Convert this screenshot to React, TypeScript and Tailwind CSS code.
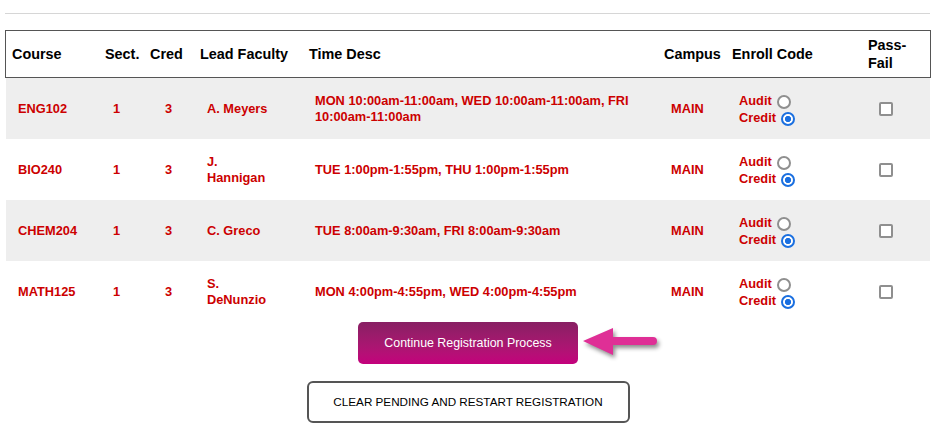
import React from "react";

type Row = {
  course: string;
  faculty: string;
  time: string;
  gray: boolean;
};

const rows: Row[] = [
  { course: "ENG102", faculty: "A. Meyers", time: "MON 10:00am-11:00am, WED 10:00am-11:00am, FRI 10:00am-11:00am", gray: true },
  { course: "BIO240", faculty: "J. Hannigan", time: "TUE 1:00pm-1:55pm, THU 1:00pm-1:55pm", gray: false },
  { course: "CHEM204", faculty: "C. Greco", time: "TUE 8:00am-9:30am, FRI 8:00am-9:30am", gray: true },
  { course: "MATH125", faculty: "S. DeNunzio", time: "MON 4:00pm-4:55pm, WED 4:00pm-4:55pm", gray: false },
];

const cols = "grid grid-cols-[93px_45px_50px_109px_355px_68px_136px_1fr]";

const radioCls =
  "appearance-none inline-block w-[14px] h-[14px] rounded-full border-2 border-[#8f8f8f] bg-white ml-[5px] mr-[3px] mt-[3px] align-[-4px] checked:border-[#1a6fe0] checked:bg-[radial-gradient(circle,#1a6fe0_0_2.8px,#ffffff_3.4px)]";

export default function App() {
  return (
    <div
      className="w-[936px] h-[431px] bg-white overflow-hidden px-[5px] pt-[13px]"
      style={{ fontFamily: '"Liberation Sans", Arial, sans-serif' }}
    >
      <div className="h-px bg-[#d6d6d6] mr-[1px]" />
      <div className="mt-[16px]">
        <div className={`${cols} h-[48px] items-center border border-[#555] text-black font-bold text-[14.4px] leading-[18px]`}>
          <div className="px-[6px]">Course</div>
          <div className="px-[6px]">Sect.</div>
          <div className="px-[6px]">Cred</div>
          <div className="px-[6px]">Lead Faculty</div>
          <div className="px-[6px]">Time Desc</div>
          <div className="px-[6px]">Campus</div>
          <div className="px-[6px]">Enroll Code</div>
          <div className="px-[6px]">
            Pass-
            <br />
            Fail
          </div>
        </div>
        <div className="px-[1px]">
          {rows.map((r) => (
            <div
              key={r.course}
              className={`${cols} h-[61px] items-center text-[#cc0000] font-bold text-[12.8px] leading-[16px] ${r.gray ? "bg-[#eeeeee]" : "bg-white"}`}
            >
              <div className="pl-[12px]">{r.course}</div>
              <div className="pl-[14px]">1</div>
              <div className="pl-[21px]">3</div>
              <div className="pl-[13px]">
                <div className="max-w-[66px]">{r.faculty}</div>
              </div>
              <div className="pl-[12px]">
                <div className="max-w-[330px]">{r.time}</div>
              </div>
              <div className="pl-[13px]">MAIN</div>
              <div className="pl-[13px] leading-[17px]">
                Audit
                <input type="radio" name={r.course} className={radioCls} />
                <br />
                Credit
                <input type="radio" name={r.course} defaultChecked className={radioCls} />
              </div>
              <div className="pl-[17px] flex items-center">
                <input
                  type="checkbox"
                  className="appearance-none block w-[14px] h-[14px] m-0 mt-[1px] border-2 border-[#8f8f8f] rounded-[2px] bg-white"
                />
              </div>
            </div>
          ))}
        </div>
      </div>
      <div className="flex flex-col items-center">
        <div className="relative">
          <button className="w-[220px] h-[42px] rounded-[5px] bg-linear-to-b from-[#881f63] to-[#c4007c] text-white text-[12.4px]">
            Continue Registration Process
          </button>
          <svg
            className="absolute left-[222px] top-[2px] drop-shadow-[2px_3px_2px_rgba(0,0,0,0.45)]"
            width="82"
            height="40"
            viewBox="0 0 82 40"
          >
            <path
              d="M3 17 L33 4 L33 13 L73 13 A4 4 0 0 1 73 21 L33 21 L33 31 Z"
              fill="#df2f96"
            />
          </svg>
        </div>
        <button className="mt-[17px] w-[323px] h-[42px] rounded-[6px] border-2 border-[#555] bg-white text-black text-[11.7px]">
          CLEAR PENDING AND RESTART REGISTRATION
        </button>
      </div>
    </div>
  );
}
